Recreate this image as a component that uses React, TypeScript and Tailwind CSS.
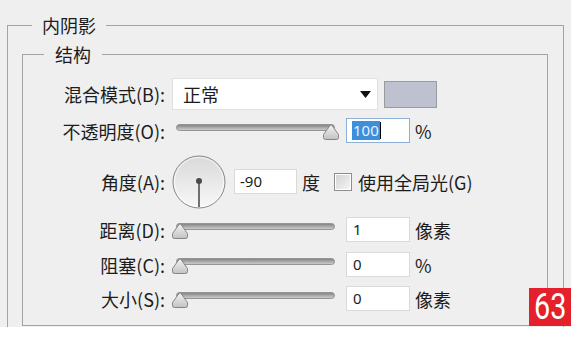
import React from "react";

const CJK = "font-['Noto_Sans_CJK_SC',sans-serif]";
const NUM = "font-['Noto_Sans',sans-serif]";

function Slider({ right }: { right?: boolean }) {
  const tx = right ? 151 : 0;
  const k = right ? "r" : "l";
  return (
    <svg width="168" height="25" viewBox="0 0 168 25" className="block shrink-0">
      <defs>
        <linearGradient id={`trk${k}`} x1="0" y1="0" x2="0" y2="1">
          <stop offset="0" stopColor="#7d7d7d" />
          <stop offset="0.5" stopColor="#a9a9a9" />
          <stop offset="1" stopColor="#d2d2d2" />
        </linearGradient>
        <linearGradient id={`thm${k}`} x1="0" y1="0" x2="0" y2="1">
          <stop offset="0" stopColor="#f4f4f4" />
          <stop offset="1" stopColor="#c2c2c2" />
        </linearGradient>
      </defs>
      <rect x="4.5" y="6.5" width="158" height="6" rx="3" fill={`url(#trk${k})`} stroke="#949494" strokeWidth="1" />
      <path
        d={`M ${tx + 7} 7.5 Q ${tx + 8} 6 ${tx + 9} 7.5 L ${tx + 15.5} 16.5 L ${tx + 15.5} 19.5 Q ${tx + 15.5} 21.5 ${tx + 13.5} 21.5 L ${tx + 2.5} 21.5 Q ${tx + 0.5} 21.5 ${tx + 0.5} 19.5 L ${tx + 0.5} 16.5 Z`}
        fill={`url(#thm${k})`}
        stroke="#858585"
        strokeWidth="1"
        strokeLinejoin="round"
      />
    </svg>
  );
}

function Label({ children }: { children: React.ReactNode }) {
  return (
    <div className={`w-[142px] shrink-0 text-right text-[18px] leading-[24px] text-[#1c1c1c] ${CJK}`}>{children}</div>
  );
}

function NumBox({ value, focused }: { value: string; focused?: boolean }) {
  if (focused) {
    return (
      <div className="ml-[6px] flex h-[25px] w-[64px] shrink-0 items-center border border-[#8cb0da] bg-white pl-[5px]">
        <span className={`bg-[#3d8fdc] px-[1px] text-[15px] leading-[19px] text-[#e8f1ff] ${NUM}`}>100</span>
        <span className="h-[17px] w-[1px] bg-black" />
      </div>
    );
  }
  return (
    <div className={`ml-[6px] flex h-[25px] w-[64px] shrink-0 items-center border border-[#dadada] bg-white pl-[6px] text-[15px] text-[#1c1c1c] ${NUM}`}>
      {value}
    </div>
  );
}

function Unit({ children }: { children: React.ReactNode }) {
  return <span className={`ml-[5px] text-[18px] leading-[24px] text-[#1c1c1c] ${CJK}`}>{children}</span>;
}

export default function App() {
  return (
    <div className="h-[342px] w-[586px] bg-white">
      <div className="relative h-[327px] w-[571px] overflow-hidden bg-[#efefef] pt-[13px]">
        <fieldset className="ml-[7px] h-[340px] w-[557px] border border-[#a3a3a3]">
          <legend className={`ml-[24px] px-[10px] text-[18px] leading-[24px] text-[#1c1c1c] ${CJK}`}>内阴影</legend>
          <fieldset className="ml-[14px] mt-[5px] h-[284px] w-[526px] border border-[#a3a3a3]">
            <legend className={`ml-[21px] px-[11px] text-[18px] leading-[24px] text-[#1c1c1c] ${CJK}`}>结构</legend>
            <div className="flex flex-col">
              {/* 混合模式 */}
              <div className="mt-[12px] flex h-[32px] items-center">
                <Label>混合模式(B):</Label>
                <div className="ml-[7px] flex h-[32px] w-[206px] items-center justify-between border border-[#e0e0e0] bg-white pl-[10px] pr-[6px]">
                  <span className={`text-[18px] leading-[24px] text-[#1c1c1c] ${CJK}`}>正常</span>
                  <svg width="11" height="7" viewBox="0 0 11 7">
                    <path d="M0 0 L11 0 L5.5 7 Z" fill="#111" />
                  </svg>
                </div>
                <div className="ml-[6px] h-[27px] w-[53px] border border-[#9a9a9a] bg-[#bec1cf]" />
              </div>
              {/* 不透明度 */}
              <div className="mt-[8px] flex h-[25px] items-center">
                <Label>不透明度(O):</Label>
                <div className="ml-[7px]">
                  <Slider right />
                </div>
                <NumBox value="100" focused />
                <Unit>%</Unit>
              </div>
              {/* 角度 */}
              <div className="mt-[12px] flex h-[53px] items-center">
                <Label>角度(A):</Label>
                <svg width="54" height="54" viewBox="0 0 54 54" className="ml-[7px] block shrink-0">
                  <defs>
                    <linearGradient id="dial" x1="0" y1="0" x2="0" y2="1">
                      <stop offset="0" stopColor="#d9d9d9" />
                      <stop offset="1" stopColor="#f8f8f8" />
                    </linearGradient>
                  </defs>
                  <circle cx="27" cy="27" r="26" fill="url(#dial)" stroke="#8a8a8a" strokeWidth="1" />
                  <circle cx="27" cy="27" r="24.5" fill="none" stroke="#ffffff" strokeWidth="1" opacity="0.7" />
                  <line x1="27" y1="26" x2="27" y2="52" stroke="#707070" strokeWidth="2" />
                  <circle cx="27" cy="26" r="3" fill="#4a4a4a" />
                </svg>
                <div className={`ml-[8px] flex h-[25px] w-[63px] shrink-0 items-center border border-[#dadada] bg-white pl-[5px] text-[15px] text-[#1c1c1c] ${NUM}`}>
                  -90
                </div>
                <Unit>度</Unit>
                <div className="ml-[14px] flex h-[18px] w-[18px] shrink-0 items-center justify-center border border-[#8c8c8c] bg-white">
                  <div className="h-[14px] w-[14px] bg-gradient-to-br from-[#d4d4d4] to-[#f4f4f4]" />
                </div>
                <span className={`ml-[6px] text-[18px] leading-[24px] text-[#1c1c1c] ${CJK}`}>使用全局光(G)</span>
              </div>
              {/* 距离 */}
              <div className="mt-[9px] flex h-[25px] items-center">
                <Label>距离(D):</Label>
                <div className="ml-[7px]">
                  <Slider />
                </div>
                <NumBox value="1" />
                <Unit>像素</Unit>
              </div>
              {/* 阻塞 */}
              <div className="mt-[10px] flex h-[25px] items-center">
                <Label>阻塞(C):</Label>
                <div className="ml-[7px]">
                  <Slider />
                </div>
                <NumBox value="0" />
                <Unit>%</Unit>
              </div>
              {/* 大小 */}
              <div className="mt-[9px] flex h-[25px] items-center">
                <Label>大小(S):</Label>
                <div className="ml-[7px]">
                  <Slider />
                </div>
                <NumBox value="0" />
                <Unit>像素</Unit>
              </div>
            </div>
          </fieldset>
        </fieldset>
        <div className="absolute left-[529px] top-[288px] flex h-[38px] w-[43px] items-center justify-center bg-[#e3202b]">
          <span className="scale-x-[0.8] font-['Roboto',sans-serif] text-[36px] leading-none text-white">63</span>
        </div>
      </div>
    </div>
  );
}
